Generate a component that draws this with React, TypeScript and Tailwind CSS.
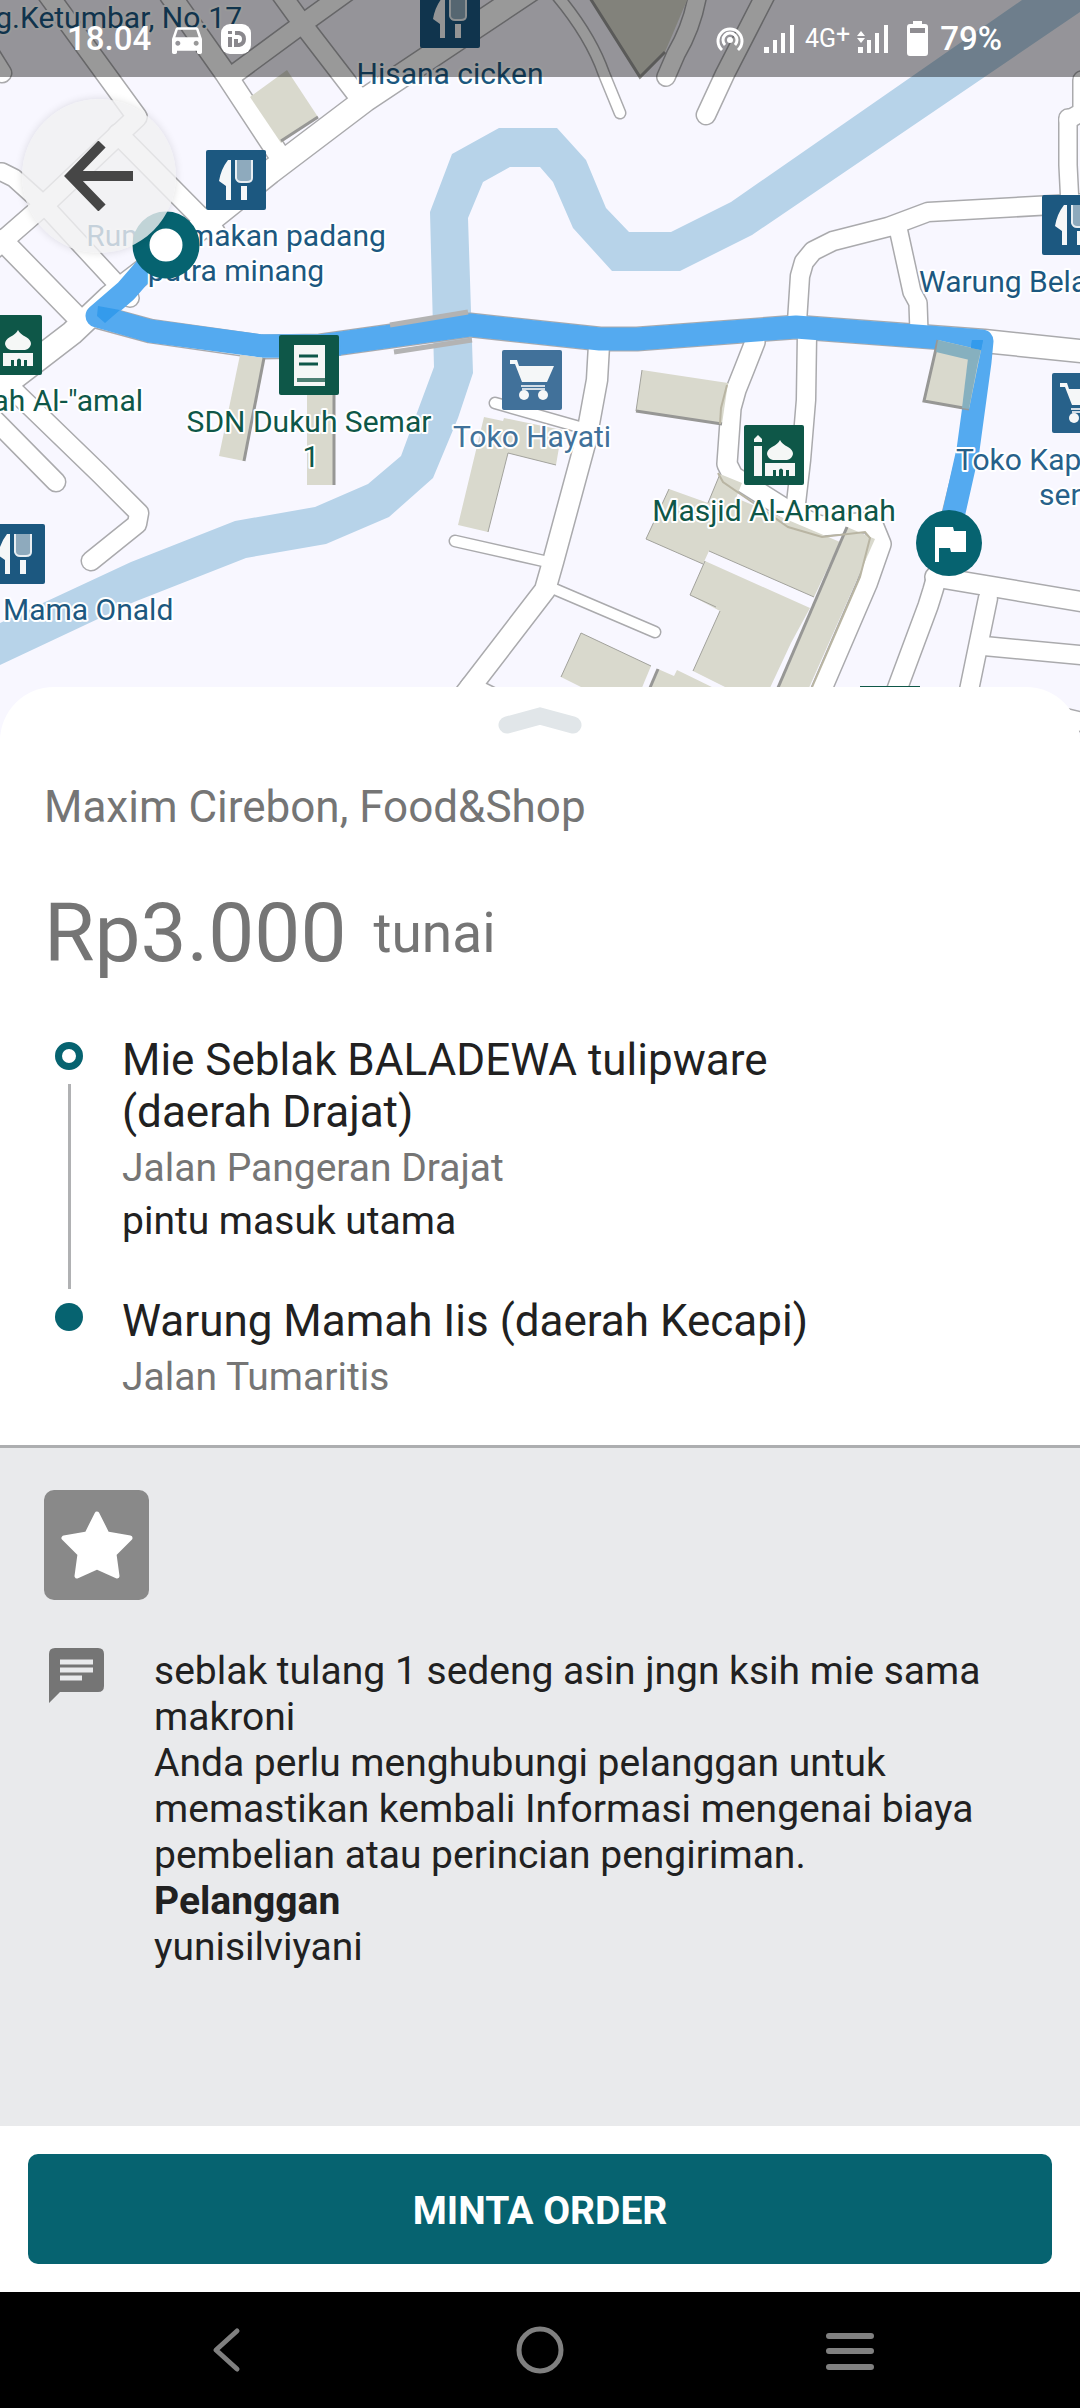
import React from 'react';
import { MdDirectionsCar } from 'react-icons/md';

/* Centre lines of the streets, with the width of the white surface */
const roads: { d: string; w: number }[] = [
  { d: 'M46 -8 L137 117 L44 205 L-10 252', w: 19 },
  { d: 'M-10 172 L2 172 L14 178 L44 205 L130 298', w: 17 },
  { d: 'M118 134 L215 232', w: 19 },
  { d: 'M2 240 L82 322', w: 20 },
  { d: 'M560 -30 L365 100 L270 172 L200 228 L110 297 L72 333 L-10 396', w: 23 },
  { d: 'M5 382 L100 474 L139 513 L137 524 L91 561', w: 18 },
  { d: 'M-20 405 L56 482', w: 18 },
  { d: 'M170 -5 L225 73 L277 152', w: 20 },
  { d: 'M229 78 L305 22 L355 -14', w: 18 },
  { d: 'M278 -10 L307 30 L357 95', w: 18 },
  { d: 'M-20 38 L2 73', w: 18 },
  { d: 'M554 -8 Q590 34 604 74 L620 113', w: 10 },
  { d: 'M698 -8 Q693 25 676 54 L666 77', w: 17 },
  { d: 'M767 -8 L725 74 L706 115', w: 18 },
  { d: 'M797 322 L800 276 L804 262 L813 251 L833 241 L888 227 L928 212 L1090 203', w: 18 },
  { d: 'M898 228 L912 292 L918 303 L919 332', w: 17 },
  { d: 'M1068 118 L1068 165 L1070 205', w: 17 },
  { d: 'M1082 80 L1082 112 L1068 120', w: 17 },
  { d: 'M599 345 L597 380 L586 440 L553 562 L545 590 L462 698', w: 20 },
  { d: 'M495 403 L590 430', w: 10 },
  { d: 'M455 541 L548 562', w: 10 },
  { d: 'M552 588 L655 632', w: 10 },
  { d: 'M470 686 L530 716', w: 18 },
  { d: 'M755 342 L744 370 L736 390 L731 408 L727 464 L733 476 L795 515 L820 526 L872 522 L881 544 L867 584 L818 698', w: 19 },
  { d: 'M807 335 L806 400 L801 460 L795 512', w: 18 },
  { d: 'M950 530 L933 590 L928 606 L893 700', w: 19 },
  { d: 'M935 577 L1090 603', w: 19 },
  { d: 'M988 598 L967 700', w: 18 },
  { d: 'M984 646 L1090 656', w: 18 },
  { d: 'M1040 712 L1090 724', w: 18 },
  { d: 'M95 316 L150 331 L262 347 L320 346 L470 325 L600 339 L637 339 L796 327 L984 341 L1090 352', w: 22 },
  { d: 'M984 341 L980 362 L968 450 L948 530', w: 18 },
];

const buildings: { d: string; shade?: string }[] = [
  { d: 'M287 70 L250 97 L281 143 L318 117Z', shade: 'M281 141 L318 117' },
  { d: 'M590 -2 L640 77 L665 52 L688 -2Z', shade: 'M590 -2 L640 77 L665 52' },
  { d: 'M240 355 L264 358 L244 461 L219 456Z', shade: 'M264 358 L244 461' },
  { d: 'M307 350 H335 V485 H307Z', shade: 'M334 388 V485' },
  { d: 'M484 417 L503 421 L504 418 L562 430 L556 465 L508 453 L488 532 L458 525Z' },
  { d: 'M642 370 L728 383 L722 424 L636 411Z', shade: 'M636 411 L722 424' },
  { d: 'M938 340 L981 350 L969 409 L923 401Z', shade: 'M938 340 L924 401 L969 409' },
  { d: 'M720 474 L742 483 L736 498 L840 542 L814 597 L709 551 L703 564 L646 539 L669 489 L708 503Z' },
  { d: 'M705 561 L810 608 L791 643 L769 690 L731 690 L693 671 L720 611 L690 595Z' },
  { d: 'M847 527 L875 539 L808 690 L776 690Z', shade: 'M847 527 L777 690' },
  { d: 'M581 633 L651 666 L641 690 L587 690 L561 677Z' },
  { d: 'M658 669 L674 676 L677 670 L718 690 L649 690Z', shade: 'M658 669 L649 690' },
];

const route =
  'M166 245 L126 291 L97 316 L150 331 L262 346 L320 346 L470 325 L600 339 L637 339 L796 327 L982 341 L980 362 L968 450 L950 530';

function FoodPin({ x, y }: { x: number; y: number }) {
  return (
    <g transform={`translate(${x} ${y})`}>
      <rect width="60" height="60" rx="2" fill="#1c5880" />
      <path d="M25 10 V50 H20 V36 L13 31 Q15 19 22 10Z" fill="#f5f7f8" />
      <path d="M31 10 H45 V28 Q45 32 41 32 H35 Q31 32 31 28Z" fill="#8eaabd" />
      <path d="M30 10 V28 Q31 32 35 32 H41 Q46 32 46 28 V10" fill="none" stroke="#e8eef2" strokeWidth="2" />
      <rect x="35" y="36" width="6" height="14" fill="#f5f7f8" />
    </g>
  );
}

function CartPin({ x, y, fill }: { x: number; y: number; fill: string }) {
  return (
    <g transform={`translate(${x} ${y})`}>
      <rect width="60" height="60" rx="2" fill={fill} />
      <path d="M8 10 H15 L17 16 H52 L45 32 H20 L13 14 H8Z" fill="#f5f7f8" />
      <path d="M19 36 H43 M20 39 H43" fill="none" stroke="#d3dde6" strokeWidth="2" />
      <circle cx="22" cy="45" r="5" fill="#f5f7f8" />
      <circle cx="41" cy="45" r="5" fill="#f5f7f8" />
    </g>
  );
}

function MosquePin({ x, y }: { x: number; y: number }) {
  return (
    <g transform={`translate(${x} ${y})`}>
      <rect width="60" height="60" rx="2" fill="#0e5748" />
      <g fill="#f5f7f6">
        <path d="M14 10 L18 14 V17 H10 V14Z M10 21 H18 V51 H10Z" />
        <path d="M36 15 Q38 19 44 22 Q49 25 49 29 Q48 34 43 35 H29 Q24 34 23 29 Q23 25 28 22 Q34 19 36 15Z" />
        <path d="M21 38 H51 V51 H45 V45 H42 V51 H39 V45 Q37 42 35 45 V51 H32 V45 H29 V51 H21Z" />
      </g>
    </g>
  );
}

function CityMap() {
  return (
    <svg
      viewBox="0 0 1080 740"
      preserveAspectRatio="xMidYMin slice"
      className="block h-full w-full bg-[#f8f7ff]"
      role="img"
      aria-label="Peta rute"
    >
      {/* River */}
      <path
        fill="#b7d3e9"
        d="M1022 0 L731 202 L671 232 L629 232 L606 208 L586 160 L557 128 L499 128 L452 154 L430 212 L434 367 L418 410 L401 456 L368 484 L315 507 L235 521 L131 562 L0 623 V665 L134 602 L246 558 L326 544 L389 517 L433 478 L458 418 L473 373 L468 218 L483 182 L510 167 L540 167 L553 182 L573 228 L612 271 L680 271 L752 235 L1080 12 V0Z"
      />

      {/* Streets: grey casing first, white surface on top */}
      <g fill="none" stroke="#aaaaad" strokeLinecap="round" strokeLinejoin="round">
        {roads.map((r) => (
          <path key={r.d} d={r.d} strokeWidth={r.w + 3} />
        ))}
      </g>
      <g fill="none" stroke="#ffffff" strokeLinecap="round" strokeLinejoin="round">
        {roads.map((r) => (
          <path key={r.d} d={r.d} strokeWidth={r.w} />
        ))}
      </g>

      {/* Route */}
      <path d={route} fill="none" stroke="#54aaf0" strokeWidth="23" strokeLinejoin="round" />
      <path d="M98 306 L120 310 L105 323 L97 316Z M972 340 L983 340 L981 350 L971 348Z" fill="#349bec" />
      <path d="M390 325 L468 312 M394 352 L472 340" stroke="#b3b3b3" strokeWidth="5" />

      {/* Buildings */}
      {buildings.map((b) => (
        <g key={b.d}>
          <path d={b.d} fill="#d9d9cd" />
          {b.shade && <path d={b.shade} fill="none" stroke="#979795" strokeWidth="3" />}
        </g>
      ))}
      <path
        d="M508 453 L556 465 M508 453 L488 532 M636 411 L642 370 M646 539 L703 564 M709 551 L814 597 M646 539 L669 489 M690 595 L705 561 M690 595 L716 607 M693 671 L720 611 M581 633 L651 666 M561 677 L581 633 M708 503 L720 474"
        stroke="#a2a29c"
        strokeWidth="1"
      />
      <path d="M969 350 L980 352 L969 409 L962 408Z" fill="#86b0bf" />
      <path d="M938 340 L981 350 L978 362 L936 352Z" fill="#86b0bf" />
      <path d="M972 340 L983 340 L981 350 L971 348Z" fill="#349bec" />
      <path d="M262 346 L320 346 L340 344" fill="none" stroke="#54aaf0" strokeWidth="23" />
      <path d="M727 385 L721 408 L720 424 M718 473 L723 482 L752 502 L788 527 L822 537 L865 532 L870 538 L860 577 L812 687" fill="none" stroke="#b9b5a3" strokeWidth="2" />
      <rect x="860" y="686" width="60" height="10" fill="#0e5748" />

      {/* Places */}
      <FoodPin x={420} y={-12} />
      <FoodPin x={206} y={150} />
      <FoodPin x={1042} y={195} />
      <FoodPin x={-15} y={524} />
      <CartPin x={502} y={350} fill="#41719a" />
      <CartPin x={1052} y={373} fill="#27618a" />
      <MosquePin x={744} y={425} />
      <MosquePin x={-18} y={315} />
      <g transform="translate(279 335)">
        <rect width="60" height="60" rx="2" fill="#0e5748" />
        <rect x="15" y="10" width="31" height="41" fill="#f5f7f6" />
        <path d="M20 21 H39 M20 29 H39" stroke="#0e5748" strokeWidth="3" />
        <path d="M18 45 H46" stroke="#4d8073" strokeWidth="4" />
      </g>

      <g
        fontFamily="Roboto, sans-serif"
        fontSize="30"
        fill="#1c5880"
        stroke="#ffffff"
        strokeWidth="4"
        strokeLinejoin="round"
        paintOrder="stroke"
        textAnchor="middle"
      >
        <text x="242" y="28" textAnchor="end">g.Ketumbar, No.17</text>
        <text x="450" y="84">Hisana cicken</text>
        <text x="236" y="246">Rumah makan padang</text>
        <text x="236" y="281">putra minang</text>
        <text x="919" y="292" textAnchor="start">Warung Bela</text>
        <text x="956" y="470" textAnchor="start" fill="#27618a">Toko Kap</text>
        <text x="1039" y="505" textAnchor="start" fill="#27618a">sen</text>
        <text x="3" y="620" textAnchor="start">Mama Onald</text>
        <text x="532" y="447" fill="#41719a">Toko Hayati</text>
        <g fill="#0e5748">
          <text x="143" y="411" textAnchor="end">ah Al-&quot;amal</text>
          <text x="309" y="432">SDN Dukuh Semar</text>
          <text x="311" y="467">1</text>
          <text x="774" y="521">Masjid Al-Amanah</text>
        </g>
      </g>

      {/* Start and finish */}
      <circle cx="166" cy="245" r="25" fill="#ffffff" stroke="#066370" strokeWidth="17" />
      <circle cx="949" cy="543" r="33" fill="#066370" />
      <path d="M935 527 H953 L954 531 H966 V552 H951 L950 548 H939 V562 H935Z" fill="#ffffff" />
    </svg>
  );
}

function SignalBars({ data }: { data?: boolean }) {
  return (
    <svg viewBox="0 0 32 28" className="h-7 w-8" fill="#ffffff">
      {data && <path d="M0 11 L4 6 L8 11Z M0 13 L4 18 L8 13Z" />}
      <path d="M1 22 H6 V28 H1Z M10 15 H14 V28 H10Z M18 8 H22 V28 H18Z M27 0 H31 V28 H27Z" />
    </svg>
  );
}

function StatusBar() {
  return (
    <div className="absolute inset-x-0 top-0 flex h-[77px] items-center justify-between bg-black/40 pr-[78px] pl-[67px] text-[33px] font-medium text-white">
      <div className="flex items-center">
        <span>18.04</span>
        <MdDirectionsCar className="ml-4 size-10" />
        <svg viewBox="0 0 30 30" className="ml-[14px] size-[30px]">
          <rect width="30" height="30" rx="9" fill="#ffffff" />
          <path d="M9 7 V10 M9 13 V23" stroke="#8a888d" strokeWidth="4" />
          <path d="M14 9 H18 Q23 10 23 15 Q23 20 18 21 H15 V15" fill="none" stroke="#8a888d" strokeWidth="4" />
        </svg>
      </div>
      <div className="flex items-center">
        <svg viewBox="0 0 28 26" className="h-[26px] w-7" fill="none" stroke="#ffffff" strokeWidth="3">
          <path d="M6 24 A12 12 0 1 1 22 24" />
          <path d="M9 19 A7 7 0 1 1 19 19" />
          <circle cx="14" cy="14" r="3" fill="#ffffff" stroke="none" />
        </svg>
        <div className="ml-[19px]">
          <SignalBars />
        </div>
        <span className="ml-[10px] flex text-[25px] font-normal">
          4G<span className="-mt-1">+</span>
        </span>
        <div className="ml-[7px]">
          <SignalBars data />
        </div>
        <svg viewBox="0 0 21 35" className="ml-[18px] h-[35px] w-[21px]">
          <path d="M6 0 H15 V3 H18 Q21 3 21 6 V32 Q21 35 18 35 H3 Q0 35 0 32 V6 Q0 3 3 3 H6Z" fill="#ffffff" />
          <rect x="3" y="7" width="15" height="5" fill="#8f8d92" />
        </svg>
        <span className="ml-3">79%</span>
      </div>
    </div>
  );
}

type Stop = { title: string; street: string; note?: string };

const stops: Stop[] = [
  { title: 'Mie Seblak BALADEWA tulipware (daerah Drajat)', street: 'Jalan Pangeran Drajat', note: 'pintu masuk utama' },
  { title: 'Warung Mamah Iis (daerah Kecapi)', street: 'Jalan Tumaritis' },
];

export default function App() {
  return (
    <div className="flex min-h-screen flex-col overflow-x-hidden bg-white font-[Roboto,sans-serif] text-[#212121]">
      <header className="relative h-[740px] shrink-0 overflow-hidden">
        <CityMap />
        <button
          type="button"
          aria-label="Kembali"
          className="absolute top-[99px] left-[22px] flex size-[154px] items-center justify-center rounded-full bg-[#f0f0f1]/80 shadow-[0_0_8px_rgba(0,0,0,0.12)]"
        >
          <svg viewBox="0 0 70 70" className="size-[70px]" fill="none" stroke="#464646" strokeWidth="10">
            <path d="M69 35 H8 M38 3 L7 35 L38 67" />
          </svg>
        </button>
        <StatusBar />
      </header>

      {/* Order sheet */}
      <main className="relative -mt-[53px] flex flex-1 flex-col rounded-t-[54px] bg-white">
        <section className="px-11 pt-5 pb-[45px]">
          <svg viewBox="0 0 84 30" className="mx-auto h-[30px] w-[84px]" fill="none">
            <path d="M9 18 L42 9 L75 18" stroke="#e1e6e9" strokeWidth="17" strokeLinecap="round" />
          </svg>
          <h1 className="mt-11 text-[44px] leading-[52px] text-[#757575]">Maxim Cirebon, Food&amp;Shop</h1>
          <p className="mt-[52px] flex items-center gap-[27px] text-[#757575]">
            <span className="text-[82px] leading-[96px]">Rp3.000</span>
            <span className="text-[55px]">tunai</span>
          </p>
          <ol className="mt-[53px]">
            {stops.map((stop, i) => (
              <li key={stop.title} className="flex gap-7">
                <div className="flex w-[50px] shrink-0 flex-col items-center pt-2">
                  {i === 0 ? (
                    <>
                      <span className="size-7 rounded-full border-[7px] border-[#066370]" />
                      <span className="mt-[14px] mb-[6px] w-[3px] flex-1 bg-[#b0b1b3]" />
                    </>
                  ) : (
                    <span className="size-7 rounded-full bg-[#066370]" />
                  )}
                </div>
                <div className={i === 0 ? 'max-w-[740px] pb-[51px]' : 'max-w-[740px]'}>
                  <h2 className="text-[44px] leading-[52px]">{stop.title}</h2>
                  <p className="mt-[7px] text-[39px] leading-[46px] text-[#757575]">{stop.street}</p>
                  {stop.note && <p className="mt-[7px] text-[39px] leading-[46px]">{stop.note}</p>}
                </div>
              </li>
            ))}
          </ol>
        </section>

        <section className="flex-1 border-t-[3px] border-[#adaeb0] bg-[#e9eaec] px-11 pt-[42px] pb-12">
          <div className="flex h-[110px] w-[105px] items-center justify-center rounded-[10px] bg-[#898989]">
            <svg viewBox="0 0 72 70" className="h-[70px] w-[72px]" fill="#ffffff" stroke="#ffffff" strokeWidth="5" strokeLinejoin="round">
              <path d="M36 4 L46 24 L69 28 L53 44 L56 66 L36 57 L16 66 L19 44 L3 28 L26 24Z" />
            </svg>
          </div>
          <div className="mt-12 flex gap-[50px]">
            <svg viewBox="0 0 55 55" className="ml-[5px] size-[55px] shrink-0">
              <path d="M6 0 H49 Q55 0 55 6 V38 Q55 44 49 44 H11 L0 55 V6 Q0 0 6 0Z" fill="#757575" />
              <path d="M11 14 H44 M11 22 H44 M11 30 H33" stroke="#e9eaec" strokeWidth="5" />
            </svg>
            <div className="text-[39px] leading-[46px]">
              <p>seblak tulang 1 sedeng asin jngn ksih mie sama makroni</p>
              <p>
                Anda perlu menghubungi pelanggan untuk memastikan kembali Informasi mengenai biaya pembelian atau
                perincian pengiriman.
              </p>
              <p className="font-bold">Pelanggan</p>
              <p>yunisilviyani</p>
            </div>
          </div>
        </section>

        <div className="p-7">
          <button
            type="button"
            className="h-[110px] w-full rounded-[10px] bg-[#066370] pt-1 text-[39px] font-bold text-white uppercase"
          >
            Minta order
          </button>
        </div>
      </main>

      {/* System navigation */}
      <nav className="grid h-[116px] shrink-0 grid-cols-[1fr_auto_1fr] items-center bg-black text-[#808080]">
        <button type="button" aria-label="Mundur" className="justify-self-start pl-[202px]">
          <svg viewBox="0 0 48 48" className="size-12" fill="none" stroke="currentColor" strokeWidth="5" strokeLinecap="round" strokeLinejoin="round">
            <path d="M35 5 L14 24 L35 43" />
          </svg>
        </button>
        <button type="button" aria-label="Beranda">
          <svg viewBox="0 0 48 48" className="size-12" fill="none" stroke="currentColor" strokeWidth="5">
            <circle cx="24" cy="24" r="21" />
          </svg>
        </button>
        <button type="button" aria-label="Menu" className="justify-self-end pr-[205px]">
          <svg viewBox="0 0 50 48" className="h-12 w-[50px]" fill="none" stroke="currentColor" strokeWidth="6" strokeLinecap="round">
            <path d="M4 10 H46 M4 25 H46 M4 41 H46" />
          </svg>
        </button>
      </nav>
    </div>
  );
}
